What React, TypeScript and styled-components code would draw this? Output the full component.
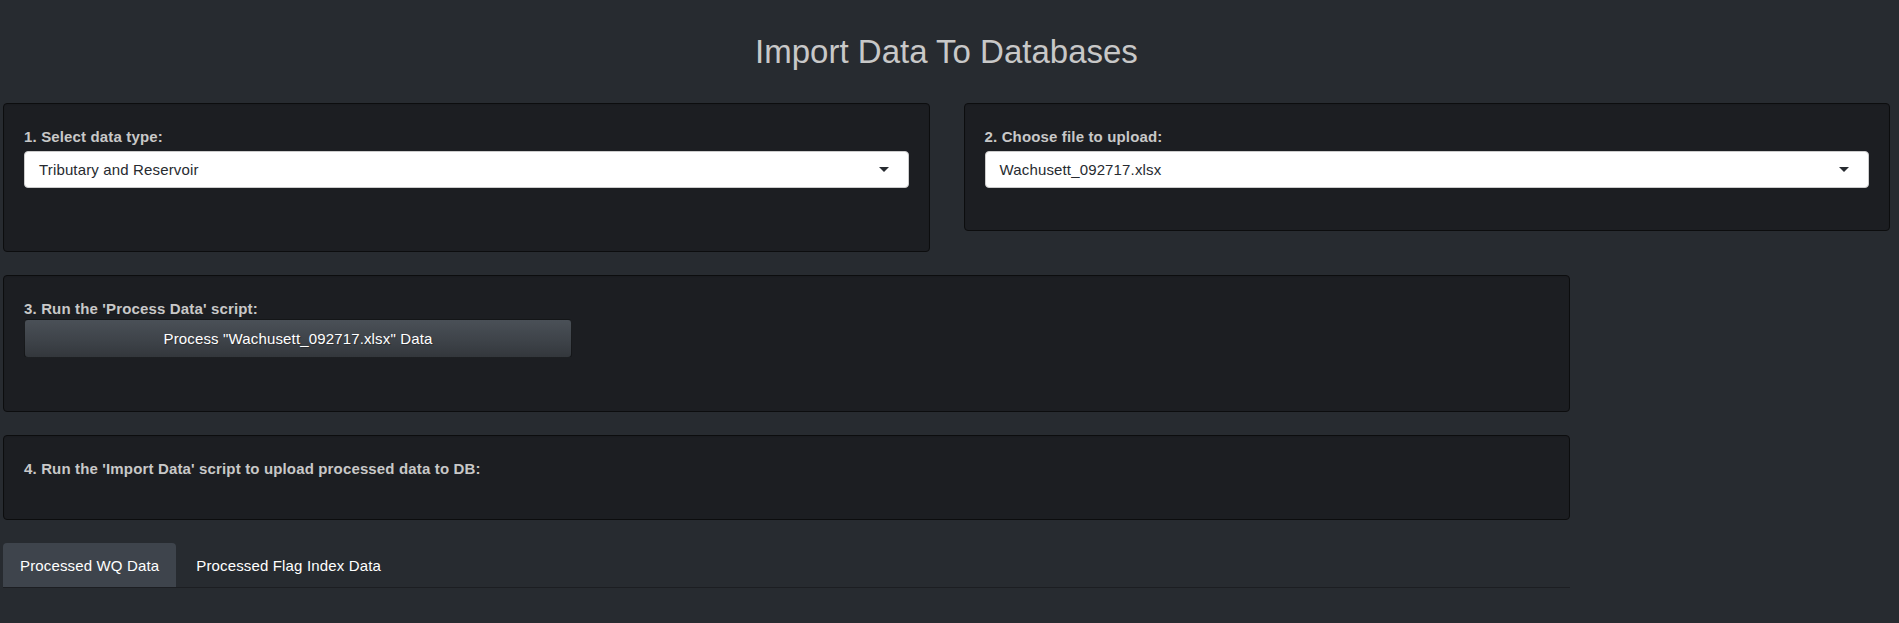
import styled, { createGlobalStyle } from "styled-components";

const GlobalStyle = createGlobalStyle`
  html, body {
    margin: 0;
    background: #272b30;
  }
  body {
    font-family: "Liberation Sans", Arial, Helvetica, sans-serif;
    font-size: 15px;
    line-height: 21px;
    letter-spacing: 0.15px;
    color: #c8c8c8;
  }
  * {
    box-sizing: border-box;
  }
`;

function Caret() {
  return (
    <svg width="10" height="5" viewBox="0 0 10 5" aria-hidden="true">
      <path d="M0 0h10L5 5z" fill="#272b30" />
    </svg>
  );
}

function App() {
  return (
    <>
      <GlobalStyle />
      <Page>
        <Title>Import Data To Databases</Title>

        <TopRow>
          <Well $bottom={63}>
            <Label $gap={4}>1. Select data type:</Label>
            <Select>
              <span>Tributary and Reservoir</span>
              <Caret />
            </Select>
          </Well>
          <Well $bottom={42}>
            <Label $gap={4}>2. Choose file to upload:</Label>
            <Select>
              <span>Wachusett_092717.xlsx</span>
              <Caret />
            </Select>
          </Well>
        </TopRow>

        <Lower>
          <Well $bottom={53}>
            <Label $gap={0}>3. Run the 'Process Data' script:</Label>
            <Button>Process "Wachusett_092717.xlsx" Data</Button>
          </Well>
          <Well $bottom={40}>
            <Label $gap={0}>
              4. Run the 'Import Data' script to upload processed data to DB:
            </Label>
          </Well>
          <Tabs>
            <Tab $active>Processed WQ Data</Tab>
            <Tab>Processed Flag Index Data</Tab>
          </Tabs>
        </Lower>
      </Page>
    </>
  );
}

const Page = styled.div`
  padding: 0 9px 30px 3px;
`;

const Title = styled.h2`
  margin: 0;
  padding: 34px 0 33px;
  text-align: center;
  font-size: 33px;
  line-height: 1.1;
  font-weight: 400;
  letter-spacing: 0;
  color: #c8c8c8;
`;

const TopRow = styled.div`
  display: grid;
  grid-template-columns: 1fr 1fr;
  column-gap: 34px;
  align-items: start;
`;

const Lower = styled.div`
  width: 1567px;
  margin-top: 23px;
  display: flex;
  flex-direction: column;
  gap: 23px;
`;

const Well = styled.div<{ $bottom: number }>`
  background: #1c1e22;
  border: 1px solid #0c0d0e;
  border-radius: 4px;
  box-shadow: inset 0 1px 1px rgba(0, 0, 0, 0.05);
  padding: 22px 20px ${(p) => p.$bottom}px;
`;

const Label = styled.div<{ $gap: number }>`
  font-weight: 700;
  color: #c8c8c8;
  margin-bottom: ${(p) => p.$gap}px;
`;

const Select = styled.div`
  display: flex;
  align-items: center;
  justify-content: space-between;
  height: 37px;
  padding: 0 19px 0 14px;
  background: #fff;
  border: 1px solid #ccc;
  border-radius: 4px;
  color: #272b30;
`;

const Button = styled.button`
  display: block;
  width: 548px;
  height: 39px;
  padding: 0 12px;
  font: inherit;
  letter-spacing: inherit;
  color: #fff;
  text-shadow: 1px 1px 1px rgba(0, 0, 0, 0.3);
  background-image: linear-gradient(#4a5057, #3d4248 60%, #33373c);
  border: 1px solid rgba(0, 0, 0, 0.6);
  border-radius: 4px;
  cursor: pointer;
`;

const Tabs = styled.div`
  display: flex;
  gap: 3px;
  border-bottom: 1px solid #1c1e22;
`;

const Tab = styled.div<{ $active?: boolean }>`
  padding: 12px 17px 11px;
  border-radius: 4px 4px 0 0;
  color: #fff;
  background: ${(p) => (p.$active ? "#3e444c" : "transparent")};
  cursor: pointer;
`;

export default App;
